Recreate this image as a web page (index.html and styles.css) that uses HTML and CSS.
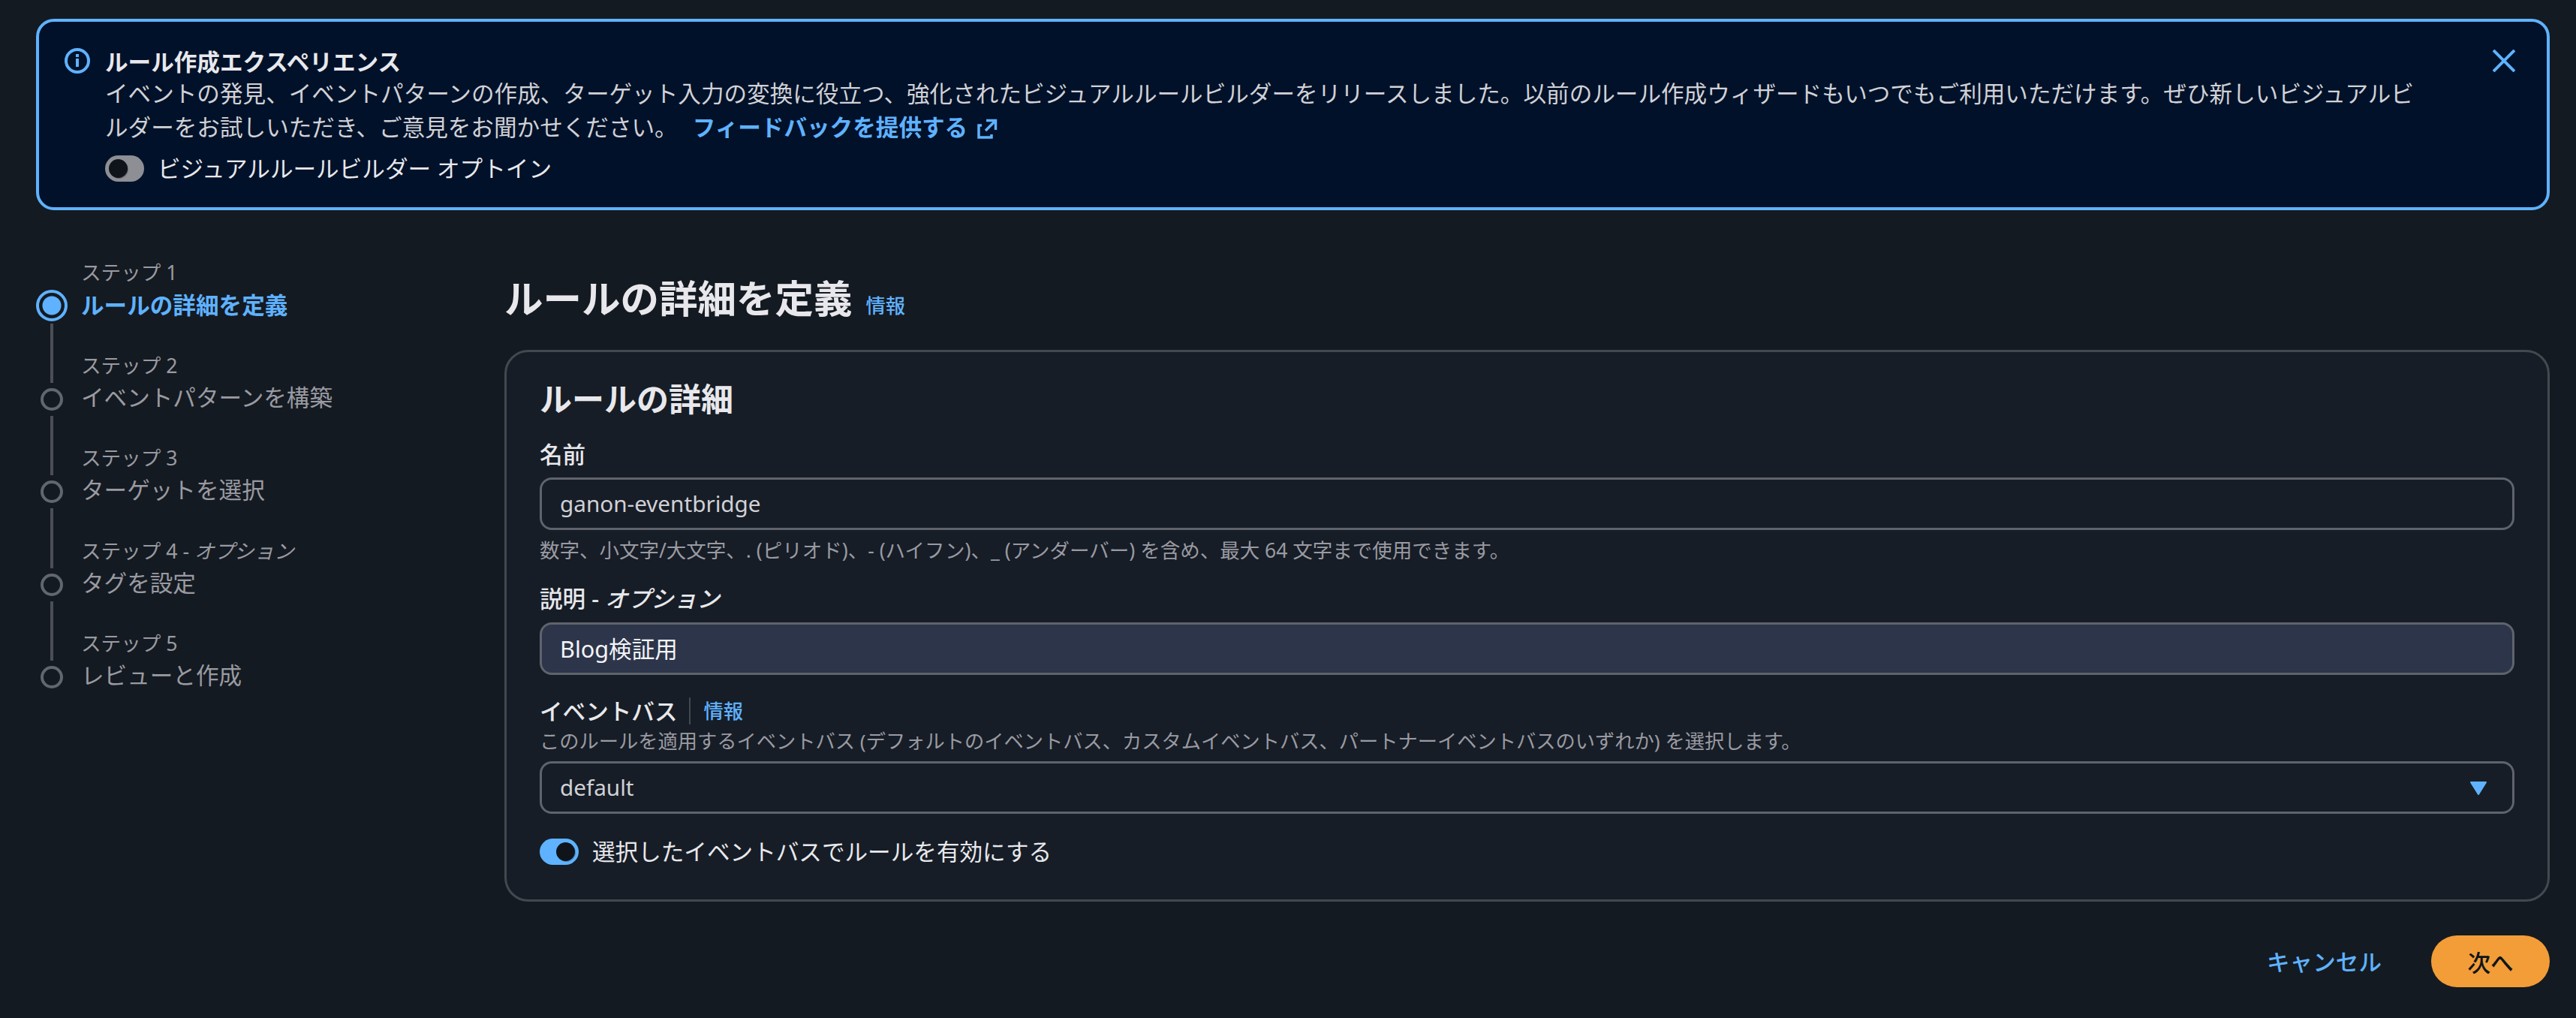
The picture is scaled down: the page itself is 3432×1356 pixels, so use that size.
FILE: index.html
```html
<!DOCTYPE html>
<html lang="ja">
<head>
    <meta charset="UTF-8">
    <meta name="viewport" content="width=device-width, initial-scale=1.0">
    <title>ルールの詳細を定義</title>
    <link rel="stylesheet" href="styles.css">
</head>
<body>
    <!-- Opt-in banner -->
    <section class="banner">
        <svg class="banner-icon" viewBox="0 0 34 34" fill="none">
            <circle cx="17" cy="17" r="15" stroke="#5fb2ff" stroke-width="4"/>
            <path d="M17 14v11" stroke="#5fb2ff" stroke-width="4"/>
            <path d="M17 8v4" stroke="#5fb2ff" stroke-width="4"/>
        </svg>
        <div class="banner-body">
            <h2 class="banner-title">ルール作成エクスペリエンス</h2>
            <p class="banner-text">イベントの発見、イベントパターンの作成、ターゲット入力の変換に役立つ、強化されたビジュアルルールビルダーをリリースしました。以前のルール作成ウィザードもいつでもご利用いただけます。ぜひ新しいビジュアルビルダーをお試しいただき、ご意見をお聞かせください。 <a class="feedback-link" href="#">フィードバックを提供する
                <svg class="external-icon" viewBox="0 0 28 28" fill="none" stroke="#5fb2ff" stroke-width="3.5">
                    <path d="M7 10H3v16h17v-4"/>
                    <path d="M12 17L25.5 3.5M13 3.5h12.5V16"/>
                </svg></a></p>
            <div class="toggle-row banner-toggle">
                <span class="toggle"><span class="toggle-thumb"></span></span>
                <span class="toggle-label">ビジュアルルールビルダー オプトイン</span>
            </div>
        </div>
        <svg class="banner-close" viewBox="0 0 30 30" fill="none" stroke="#5fb2ff" stroke-width="4">
            <path d="M1 1l28 28M29 1L1 29"/>
        </svg>
    </section>

    <div class="layout">
        <!-- Wizard steps -->
        <ol class="steps">
            <li class="step step-active">
                <span class="step-label">ステップ 1</span>
                <span class="step-dot"></span>
                <span class="step-name">ルールの詳細を定義</span>
            </li>
            <li class="step">
                <span class="step-line"></span>
                <span class="step-label">ステップ 2</span>
                <span class="step-dot"></span>
                <span class="step-name">イベントパターンを構築</span>
            </li>
            <li class="step">
                <span class="step-line"></span>
                <span class="step-label">ステップ 3</span>
                <span class="step-dot"></span>
                <span class="step-name">ターゲットを選択</span>
            </li>
            <li class="step">
                <span class="step-line"></span>
                <span class="step-label">ステップ 4 - <i>オプション</i></span>
                <span class="step-dot"></span>
                <span class="step-name">タグを設定</span>
            </li>
            <li class="step">
                <span class="step-line"></span>
                <span class="step-label">ステップ 5</span>
                <span class="step-dot"></span>
                <span class="step-name">レビューと作成</span>
            </li>
        </ol>

        <main class="content">
            <div class="page-head">
                <h1>ルールの詳細を定義</h1>
                <a class="info-link" href="#">情報</a>
            </div>

            <section class="card">
                <h2>ルールの詳細</h2>

                <div class="form-group group-name">
                    <label for="rule-name">名前</label>
                    <div class="field" id="rule-name">ganon-eventbridge</div>
                    <p class="hint">数字、小文字/大文字、. (ピリオド)、- (ハイフン)、_ (アンダーバー) を含め、最大 64 文字まで使用できます。</p>
                </div>

                <div class="form-group group-desc">
                    <label for="rule-desc">説明 - <i>オプション</i></label>
                    <div class="field field-filled" id="rule-desc">Blog検証用</div>
                </div>

                <div class="form-group group-bus">
                    <div class="label-row">
                        <label for="rule-bus">イベントバス</label>
                        <a class="info-link" href="#">情報</a>
                    </div>
                    <p class="hint">このルールを適用するイベントバス (デフォルトのイベントバス、カスタムイベントバス、パートナーイベントバスのいずれか) を選択します。</p>
                    <div class="field field-select" id="rule-bus">
                        default
                        <svg class="select-arrow" viewBox="0 0 22 18"><path d="M1 1h20L11 17z" fill="#5fb2ff" stroke="#5fb2ff" stroke-width="2" stroke-linejoin="round"/></svg>
                    </div>
                </div>

                <div class="toggle-row card-toggle">
                    <span class="toggle toggle-on"><span class="toggle-thumb"></span></span>
                    <span class="toggle-label">選択したイベントバスでルールを有効にする</span>
                </div>
            </section>

            <div class="actions">
                <a class="cancel" href="#">キャンセル</a>
                <button class="next">次へ</button>
            </div>
        </main>
    </div>
</body>
</html>
```

FILE: styles.css
```css
* {
    margin: 0;
    padding: 0;
    box-sizing: border-box;
}

body {
    padding: 25px 35px 0 48px;
    background: #141a21;
    color: #e8e8ec;
    font-family: "Noto Sans", "Noto Sans CJK JP", sans-serif;
    font-size: 30.6px;
    line-height: 44px;
}

a {
    color: #5fb2ff;
    text-decoration: none;
}

i {
    font-style: italic;
}

/* banner */
.banner {
    display: flex;
    height: 255px;
    padding: 33px 42px 0 34px;
    background: #001129;
    border: 4px solid #5fb2ff;
    border-radius: 24px;
}

.banner-icon {
    flex: none;
    width: 34px;
    height: 34px;
    margin-top: 2px;
    margin-right: 20px;
}

.banner-body {
    width: 3084px;
}

.banner-title {
    font-size: 30.6px;
    font-weight: 700;
    line-height: 40px;
}

.banner-text {
    color: #d1d1d6;
    line-height: 45px;
}

.feedback-link {
    margin-left: 12px;
    font-weight: 700;
}

.external-icon {
    width: 28px;
    height: 28px;
    margin-left: 4px;
    vertical-align: -4px;
}

.banner-close {
    flex: none;
    width: 30px;
    height: 30px;
    margin-top: 4px;
    margin-left: auto;
}

/* toggles */
.toggle-row {
    display: flex;
    align-items: center;
    gap: 20px;
}

.toggle {
    display: flex;
    width: 52px;
    height: 35px;
    padding: 5px;
    background: #8e8e95;
    border-radius: 18px;
}

.toggle-on {
    justify-content: flex-end;
    background: #5fb2ff;
}

.toggle-thumb {
    width: 25px;
    height: 25px;
    background: #0f141a;
    border-radius: 50%;
    box-shadow: 1px 1px 0 rgba(0, 0, 0, 0.25);
}

.toggle-label {
    margin-left: -2px;
}

.banner-toggle {
    margin-top: 10px;
}

/* layout */
.layout {
    display: flex;
    align-items: flex-start;
}

/* steps */
.steps {
    flex: none;
    width: 624px;
    margin-top: 61px;
    list-style: none;
}

.step {
    display: grid;
    grid-template-columns: 42px 1fr;
    column-gap: 18px;
}

.step-label {
    grid-column: 2;
    align-self: end;
    padding-bottom: 4px;
    font-size: 26.6px;
    line-height: 44px;
    color: #9a9aa2;
}

.step-line {
    grid-column: 1;
    grid-row: 1;
    justify-self: center;
    width: 4px;
    height: 79.2px;
    margin-top: 3px;
    margin-bottom: 3px;
    background: #4c4f57;
}

.step-dot {
    grid-column: 1;
    justify-self: center;
    align-self: center;
    width: 30px;
    height: 30px;
    background: #141a21;
    border: 4px solid #62666e;
    border-radius: 50%;
}

.step-name {
    padding-bottom: 6px;
    color: #9a9aa2;
    line-height: 32px;
}

.step-active .step-label {
    padding-bottom: 1px;
}

.step-active .step-dot {
    width: 42px;
    height: 42px;
    border-color: #5fb2ff;
    background: radial-gradient(circle, #5fb2ff 0 12px, #141a21 13px);
}

.step-active .step-name {
    padding-bottom: 2px;
    color: #5fb2ff;
    font-weight: 700;
    line-height: 40px;
}

/* content */
.content {
    flex: 1;
}

.page-head {
    display: flex;
    align-items: baseline;
    gap: 18px;
    height: 186px;
    padding-top: 86px;
}

.page-head h1 {
    font-size: 51.5px;
    font-weight: 700;
    line-height: 62px;
}

.info-link {
    font-size: 26.3px;
    font-weight: 500;
}

.card {
    height: 735px;
    padding: 35px 44px 0 44px;
    background: #161d26;
    border: 3px solid #44484f;
    border-radius: 32px;
}

.card h2 {
    font-size: 43px;
    font-weight: 700;
    line-height: 56px;
}

.form-group label {
    display: block;
    font-weight: 500;
    line-height: 44px;
}

.field {
    height: 70px;
    padding: 0 24px;
    border: 3px solid #5f636b;
    border-radius: 16px;
    line-height: 64px;
    color: #d1d1d6;
    font-size: 29.7px;
}

.field-filled {
    background: #2c354a;
    color: #f4f4f7;
    font-size: 30.6px;
}

.field-select {
    position: relative;
}

.select-arrow {
    position: absolute;
    top: 24px;
    right: 34px;
    width: 22px;
    height: 18px;
}

.hint {
    color: #9a9aa2;
    font-size: 26.5px;
    line-height: 40px;
}

.group-name {
    margin-top: 23px;
}

.group-name label {
    margin-bottom: 9px;
}

.group-name .hint {
    margin-top: 7px;
}

.group-desc {
    margin-top: 22px;
}

.group-desc label {
    margin-bottom: 10px;
}

.group-bus {
    margin-top: 26px;
}

.label-row {
    display: flex;
    align-items: center;
    gap: 15px;
}

.label-row .info-link {
    padding-left: 18px;
    border-left: 2px solid #44484f;
    line-height: 36px;
}

.group-bus .hint {
    margin-bottom: 9px;
    font-size: 26.25px;
    line-height: 36px;
}

.card-toggle {
    margin-top: 28px;
}

/* footer buttons */
.actions {
    display: flex;
    justify-content: flex-end;
    align-items: center;
    gap: 66px;
    margin-top: 45px;
}

.cancel {
    font-weight: 500;
}

.next {
    width: 158px;
    height: 69px;
    background: #f29d38;
    border: none;
    border-radius: 35px;
    color: #0f141a;
    font-family: inherit;
    font-size: 30.6px;
    font-weight: 500;
}
```
